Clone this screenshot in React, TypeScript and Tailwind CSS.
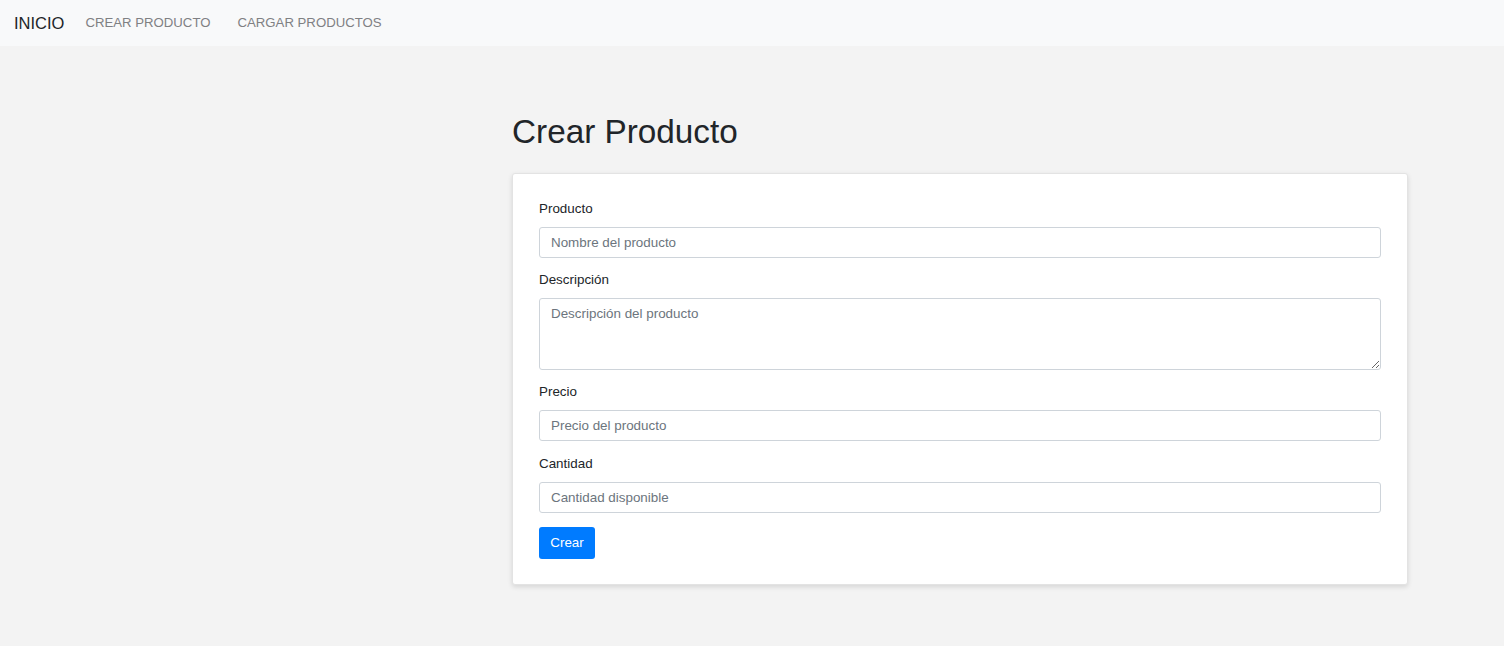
import { useState } from 'react'

/**
 * Product creation page: light top navbar, heading and a white card holding
 * the form (name, description, price, quantity) with a blue submit button.
 */
const inputClass =
  'block h-[31px] w-full rounded-[3px] border border-[#ced4da] bg-white px-[11px] text-[13.4px] text-[#495057] placeholder:text-[#6c757d] focus:outline-none'

function Field({ label, children, className = 'mb-[12px]' }: { label: string; children: React.ReactNode; className?: string }) {
  return (
    <div className={className}>
      <label className="mb-[8px] block h-[20px] text-[13.4px] leading-[20px] text-[#212529]">{label}</label>
      {children}
    </div>
  )
}

export default function App() {
  const [nombre, setNombre] = useState('')
  const [descripcion, setDescripcion] = useState('')
  const [precio, setPrecio] = useState('')
  const [cantidad, setCantidad] = useState('')

  return (
    <div className="min-h-[646px] bg-[#f3f3f3] font-['Liberation_Sans',Arial,sans-serif]">
      <nav className="flex h-[46px] items-center bg-[#f8f9fa] pl-[14px]">
        <a href="#" className="text-[16.5px] leading-none text-[#212529]">
          INICIO
        </a>
        <a href="#" className="ml-[21px] text-[13.2px] leading-none text-[#7f8083]">
          CREAR PRODUCTO
        </a>
        <a href="#" className="ml-[27px] text-[13.2px] leading-none text-[#7f8083]">
          CARGAR PRODUCTOS
        </a>
      </nav>

      <main className="ml-[512px] w-[896px] pt-[67px]">
        <h1 className="mb-[20px] h-[40px] text-[33.3px] leading-[38px] text-[#212529]">Crear Producto</h1>

        <form
          onSubmit={(e) => e.preventDefault()}
          className="rounded-[3px] border border-[#e3e3e3] bg-white px-[26px] pb-[25px] pt-[25px] shadow-[0_2px_5px_rgba(0,0,0,0.12)]"
        >
          <Field label="Producto">
            <input
              className={inputClass}
              placeholder="Nombre del producto"
              value={nombre}
              onChange={(e) => setNombre(e.target.value)}
            />
          </Field>
          <Field label="Descripción">
            <textarea
              className="block h-[72px] w-full rounded-[3px] border border-[#ced4da] bg-white px-[11px] py-[6px] text-[13.4px] leading-[18px] text-[#495057] placeholder:text-[#6c757d] focus:outline-none"
              placeholder="Descripción del producto"
              value={descripcion}
              onChange={(e) => setDescripcion(e.target.value)}
            />
          </Field>
          <Field label="Precio" className="mb-[13px]">
            <input
              className={inputClass}
              placeholder="Precio del producto"
              value={precio}
              onChange={(e) => setPrecio(e.target.value)}
            />
          </Field>
          <Field label="Cantidad" className="mb-[14px]">
            <input
              className={inputClass}
              placeholder="Cantidad disponible"
              value={cantidad}
              onChange={(e) => setCantidad(e.target.value)}
            />
          </Field>
          <button
            type="submit"
            className="h-[32px] w-[56px] rounded-[3px] bg-[#007bff] text-[13.4px] text-white"
          >
            Crear
          </button>
        </form>
      </main>
    </div>
  )
}
